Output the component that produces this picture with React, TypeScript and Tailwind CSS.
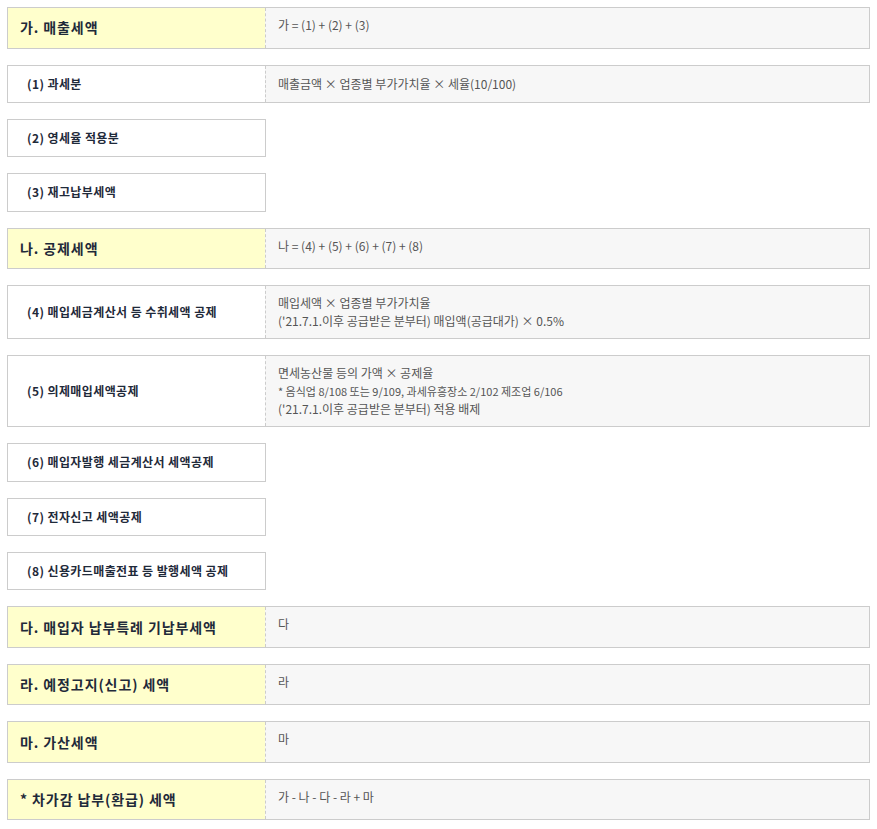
import React from "react";

const font = { fontFamily: '"Noto Sans CJK KR", "Noto Sans", sans-serif' };

function HeadRow({ label, lines }: { label: string; lines: React.ReactNode[] }) {
  return (
    <div className="flex h-[41.5px] border border-[#cccccc]">
      <div className="flex w-[257px] shrink-0 items-center bg-[#ffffcc] pl-[12px] text-[14px] font-bold tracking-[0.9px] text-[#1f2a3a]">
        {label}
      </div>
      <div className="flex-1 border-l border-dashed border-[#cccccc] bg-[#f7f7f7] px-[12px] py-[8px] text-[12px] leading-[18px] text-[#555555]">
        {lines}
      </div>
    </div>
  );
}

function SubRow({ label, lines, h }: { label: string; lines?: React.ReactNode[]; h?: string }) {
  if (!lines) {
    return (
      <div className="flex h-[38.4px] w-[259px] items-center border border-[#cccccc] bg-white pl-[19px] text-[12px] font-bold tracking-[0.4px] text-[#1f2a3a]">
        {label}
      </div>
    );
  }
  return (
    <div className={`flex border border-[#cccccc] ${h ?? "h-[38.4px]"}`}>
      <div className="flex w-[257px] shrink-0 items-center bg-white pl-[19px] text-[12px] font-bold tracking-[0.4px] text-[#1f2a3a]">
        {label}
      </div>
      <div className="flex flex-1 flex-col justify-center border-l border-dashed border-[#cccccc] bg-[#f7f7f7] px-[12px] text-[12px] leading-[18px] text-[#555555]">
        {lines}
      </div>
    </div>
  );
}

export default function App() {
  return (
    <div className="flex w-[877px] flex-col gap-4 bg-white px-[7px] pt-[7px] pb-[9px]" style={font}>
      <HeadRow label="가. 매출세액" lines={["가 = (1) + (2) + (3)"]} />
      <SubRow label="(1) 과세분" lines={["매출금액 × 업종별 부가가치율 × 세율(10/100)"]} />
      <SubRow label="(2) 영세율 적용분" />
      <SubRow label="(3) 재고납부세액" />
      <HeadRow label="나. 공제세액" lines={["나 = (4) + (5) + (6) + (7) + (8)"]} />
      <SubRow
        label="(4) 매입세금계산서 등 수취세액 공제"
        h="h-[54px]"
        lines={[
          <div key="a">매입세액 × 업종별 부가가치율</div>,
          <div key="b">('21.7.1.이후 공급받은 분부터) 매입액(공급대가) × 0.5%</div>,
        ]}
      />
      <SubRow
        label="(5) 의제매입세액공제"
        h="h-[72px]"
        lines={[
          <div key="a">면세농산물 등의 가액 × 공제율</div>,
          <div key="b" className="text-[11px]">
            * 음식업 8/108 또는 9/109, 과세유흥장소 2/102 제조업 6/106
          </div>,
          <div key="c">('21.7.1.이후 공급받은 분부터) 적용 배제</div>,
        ]}
      />
      <SubRow label="(6) 매입자발행 세금계산서 세액공제" />
      <SubRow label="(7) 전자신고 세액공제" />
      <SubRow label="(8) 신용카드매출전표 등 발행세액 공제" />
      <HeadRow label="다. 매입자 납부특례 기납부세액" lines={["다"]} />
      <HeadRow label="라. 예정고지(신고) 세액" lines={["라"]} />
      <HeadRow label="마. 가산세액" lines={["마"]} />
      <HeadRow label="* 차가감 납부(환급) 세액" lines={["가 - 나 - 다 - 라 + 마"]} />
    </div>
  );
}
